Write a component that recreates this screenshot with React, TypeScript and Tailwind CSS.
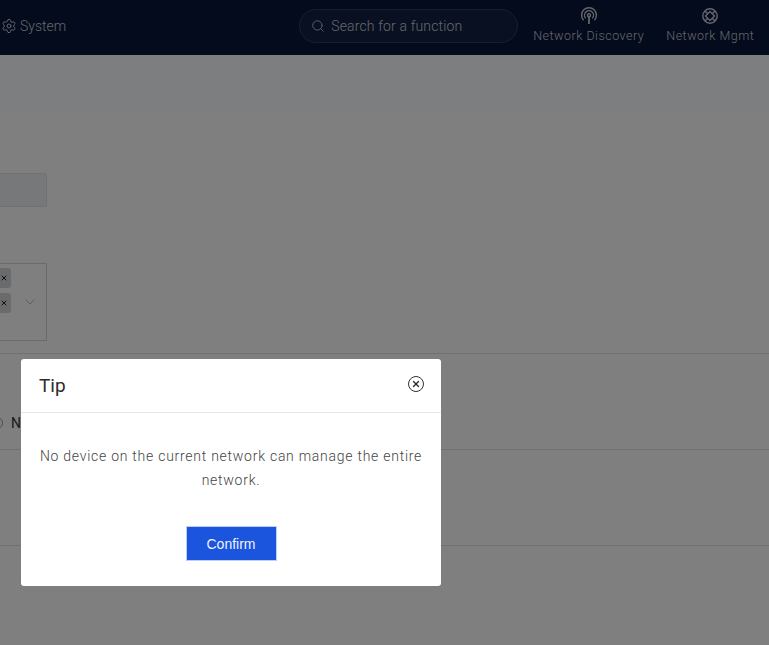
import { ChevronDown, Search, Settings, X } from "lucide-react"

const font = { fontFamily: '"Roboto", "Liberation Sans", sans-serif' }

function Tag() {
  return (
    <div className="flex h-[20px] w-[11px] items-center justify-end rounded-r-[3px] bg-[#d4d6d9] pr-[3px]">
      <X className="h-2 w-2 text-[#222]" strokeWidth={3} />
    </div>
  )
}

function DiscoveryIcon() {
  return (
    <svg viewBox="0 0 18 18" className="h-[18px] w-[18px]" fill="none" stroke="currentColor" strokeWidth="1.4">
      <path d="M3.6 13.2a7.4 7.4 0 1 1 10.8 0" />
      <path d="M5.7 11.2a4.5 4.5 0 1 1 6.6 0" />
      <circle cx="9" cy="8.2" r="1.5" />
      <path d="M9 10v7" strokeWidth="1.8" />
    </svg>
  )
}

function MgmtIcon() {
  return (
    <svg viewBox="0 0 18 18" className="h-[18px] w-[18px]" fill="none" stroke="currentColor" strokeWidth="1.4">
      <circle cx="9" cy="9" r="7.2" />
      <path d="M9 4.5 13.5 9 9 13.5 4.5 9Z" />
      <path d="M3.9 3.9 6.8 6.8M14.1 3.9 11.2 6.8M3.9 14.1l2.9-2.9M14.1 14.1l-2.9-2.9" />
    </svg>
  )
}

export default function App() {
  return (
    <div className="relative h-[645px] w-[769px] overflow-hidden bg-white" style={font}>
      {/* Top bar */}
      <header className="flex h-[55px] items-center bg-[#08163a] pb-[3px] pl-[1px] text-[#c9cdd6]">
        <div className="flex items-center gap-[3px] text-sm font-light">
          <Settings className="h-[16px] w-[16px]" strokeWidth={1.5} />
          <span>System</span>
        </div>
        <div className="ml-[233px] flex h-[34px] w-[219px] items-center gap-[6px] rounded-full border border-[#2f3d60] bg-[#122145] pl-[11px] text-sm font-light tracking-[0.15px]">
          <Search className="h-[14px] w-[14px]" strokeWidth={1.5} />
          <span>Search for a function</span>
        </div>
        <div className="ml-[15px] flex flex-col items-center text-[12.5px] font-light tracking-[0.5px]">
          <DiscoveryIcon />
          <span className="mt-0.5">Network Discovery</span>
        </div>
        <div className="ml-[22px] flex flex-col items-center text-[12.5px] font-light tracking-[0.5px]">
          <MgmtIcon />
          <span className="mt-0.5">Network Mgmt</span>
        </div>
      </header>

      {/* Page behind the dialog */}
      <div className="h-[58px] bg-[#fafcff]" />
      <main className="bg-white">
        <div className="ml-[-10px] mt-[60px] h-[34px] w-[57px] rounded-[2px] border border-[#dfe2e6] bg-[#eef0f2]" />
        <div className="ml-[-10px] mt-[56px] flex h-[78px] w-[57px] items-center justify-between border border-[#d5d7da] pl-[9px] pr-[8px]">
          <div className="mt-[4px] flex flex-col gap-[5px] self-start">
            <Tag />
            <Tag />
          </div>
          <ChevronDown className="h-4 w-4 text-[#aaa]" strokeWidth={1.25} />
        </div>
        <div className="mt-[12px] h-[97px] border-y border-[#dfe2e6]" />
        <div className="h-[96px] border-b border-[#dfe2e6]" />
      </main>
      <div className="absolute left-[-9px] top-[413px] flex items-center gap-2 text-sm text-[#333]">
        <span className="h-3 w-3 rounded-full border border-[#999]" />
        <span>N</span>
      </div>

      {/* Dimming layer */}
      <div className="absolute inset-0 bg-black/50" />

      {/* Tip dialog */}
      <div className="absolute left-[21px] top-[359px] h-[227px] w-[420px] rounded-[3px] bg-white">
        <div className="flex h-[54px] items-center justify-between border-b border-[#e6e6e6] pl-[18px] pr-[17px]">
          <span className="mt-[2px] text-[19px] text-[#2c2c2c]">Tip</span>
          <span className="mb-[4px] flex h-4 w-4 items-center justify-center rounded-full border border-[#333] text-[#222]">
            <X className="h-2.5 w-2.5" strokeWidth={3} />
          </span>
        </div>
        <p className="mx-auto mt-[31px] w-[396px] text-center text-sm font-light leading-6 tracking-[0.74px] text-[#444]">
          No device on the current network can manage the entire network.
        </p>
        <div className="mt-[34px] flex justify-center">
          <button className="h-[35px] w-[91px] border border-[#bcd0f7] bg-[#1b55de] text-sm text-[#eef3ff]" style={{ fontFamily: '"Liberation Sans", sans-serif' }}>
            Confirm
          </button>
        </div>
      </div>
    </div>
  )
}
